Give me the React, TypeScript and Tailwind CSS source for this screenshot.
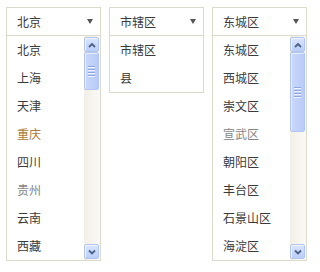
import React from 'react';

type Item = { label: string; tone?: 'hover' | 'muted' };

const provinces: Item[] = [
  { label: '北京' },
  { label: '上海' },
  { label: '天津' },
  { label: '重庆', tone: 'hover' },
  { label: '四川' },
  { label: '贵州', tone: 'muted' },
  { label: '云南' },
  { label: '西藏' },
];

const cities: Item[] = [{ label: '市辖区' }, { label: '县' }];

const districts: Item[] = [
  { label: '东城区' },
  { label: '西城区' },
  { label: '崇文区' },
  { label: '宣武区', tone: 'muted' },
  { label: '朝阳区' },
  { label: '丰台区' },
  { label: '石景山区' },
  { label: '海淀区' },
];

function Chevron({ up }: { up?: boolean }) {
  return (
    <svg width="8" height="6" viewBox="0 0 8 6" className="block">
      <path
        d={up ? 'M1 5 L4 2 L7 5' : 'M1 1.5 L4 4.5 L7 1.5'}
        fill="none"
        stroke="#4d6185"
        strokeWidth="1.8"
      />
    </svg>
  );
}

function ScrollButton({ up }: { up?: boolean }) {
  return (
    <div className="h-[15px] w-[15px] rounded-[2px] border border-[#b3c6ee] bg-gradient-to-b from-[#dbe6fd] to-[#b9cdf8] flex items-center justify-center shadow-[inset_1px_1px_0_#eef3ff]">
      <Chevron up={up} />
    </div>
  );
}

function Scrollbar({ thumb }: { thumb: number }) {
  return (
    <div className="w-[16px] flex flex-col py-[1px] pr-[1px] bg-gradient-to-r from-[#f1efe6] to-[#faf9f5]">
      <ScrollButton up />
      <div className="flex-1 flex flex-col">
        <div
          className="w-[15px] rounded-[2px] border border-[#b3c6ee] bg-gradient-to-r from-[#c9d8fc] to-[#b8cbf7] flex flex-col items-center justify-center gap-[2px] shadow-[inset_1px_1px_0_#e6edff]"
          style={{ height: thumb }}
        >
          {[0, 1, 2, 3].map((i) => (
            <div key={i} className="h-[1px] w-[7px] bg-[#8ea6dc] shadow-[0_1px_0_#eef3ff]" />
          ))}
        </div>
      </div>
      <ScrollButton />
    </div>
  );
}

function Select({ value, items, thumb }: { value: string; items: Item[]; thumb?: number }) {
  return (
    <div className="w-[95px] border border-[#dcd9cd] bg-white">
      <div className="h-[28px] border-b border-[#dcd9cd] flex items-center justify-between pl-[10px] pr-[7px]">
        <span className="text-[12px] text-[#3a3a3a]">{value}</span>
        <span className="w-0 h-0 border-l-[3.5px] border-r-[3.5px] border-t-[5px] border-l-transparent border-r-transparent border-t-[#555]" />
      </div>
      <div className="flex">
        <div className="flex-1">
          {items.map((it) => (
            <div
              key={it.label}
              className={`h-[28px] flex items-center pl-[10px] text-[12px] ${
                it.tone === 'hover'
                  ? 'text-[#a9793a]'
                  : it.tone === 'muted'
                  ? 'text-[#858585]'
                  : 'text-[#3a3a3a]'
              }`}
            >
              {it.label}
            </div>
          ))}
        </div>
        {thumb ? <Scrollbar thumb={thumb} /> : null}
      </div>
    </div>
  );
}

export default function App() {
  return (
    <div
      className="w-[314px] h-[272px] bg-white flex items-start gap-[8px] pl-[6px] pt-[7px]"
      style={{ fontFamily: '"Noto Sans CJK SC", "Liberation Sans", sans-serif' }}
    >
      <Select value="北京" items={provinces} thumb={38} />
      <Select value="市辖区" items={cities} />
      <Select value="东城区" items={districts} thumb={80} />
    </div>
  );
}
